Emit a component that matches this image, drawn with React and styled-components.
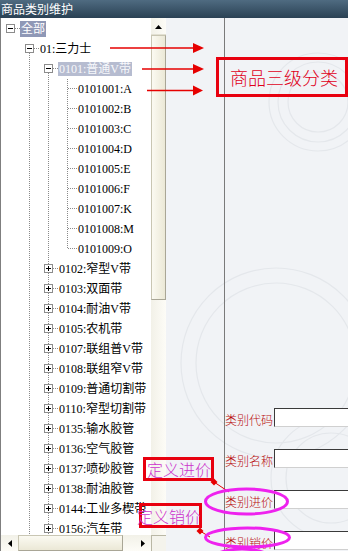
import React from 'react';
import styled, { createGlobalStyle } from 'styled-components';

const Global = createGlobalStyle`
  html, body { margin: 0; padding: 0; }
  body { width: 348px; height: 551px; overflow: hidden; background: #fff; }
`;

const Page = styled.div`
  position: relative;
  width: 348px;
  height: 551px;
  overflow: hidden;
  display: flex;
  flex-direction: column;
  font-family: "Liberation Serif", "Noto Sans CJK SC", serif;
`;

const TitleBar = styled.div`
  height: 18px;
  flex: none;
  background: linear-gradient(#4f6b81, #2a4154);
  color: #fff;
  font: 12px/18px "Noto Sans CJK SC", sans-serif;
  padding-left: 1px;
`;

const Body = styled.div`
  flex: 1;
  display: flex;
  min-height: 0;
`;

const TreePane = styled.div`
  width: 166px;
  flex: none;
  display: grid;
  grid-template-columns: 151px 15px;
  grid-template-rows: 1fr 16px;
  background: #fff;
`;

const TreeView = styled.div`
  border-left: 1px solid #7f7f7f;
  padding-top: 1px;
  overflow: hidden;
  background: #fff;
`;

const Row = styled.div`
  display: flex;
  height: 20px;
  align-items: center;
  white-space: nowrap;
`;

const Cell = styled.svg`
  flex: none;
  width: 19px;
  height: 20px;
  display: block;
`;

const Label = styled.span`
  font-size: 12px;
  line-height: ${p => (p.$sel === 'active' ? '16px' : '14px')};
  height: ${p => (p.$sel === 'active' ? '16px' : '14px')};
  padding: 0 1px;
  color: ${p => (p.$sel === 'active' ? '#fff' : p.$sel === 'inactive' ? '#f7f8fb' : '#000')};
  background: ${p => (p.$sel === 'active' ? '#8f98b6' : p.$sel === 'inactive' ? '#b6bcd0' : 'transparent')};
`;

const VScroll = styled.div`
  display: flex;
  flex-direction: column;
  background: linear-gradient(to right, #f2f1e8, #fdfcf7);
`;

const ScrollBtn = styled.div`
  flex: none;
  ${p => (p.$horizontal ? `width: ${p.$w || 16}px;` : 'height: 16px;')}
  display: flex;
  align-items: center;
  justify-content: center;
  box-sizing: border-box;
  margin-top: ${p => (p.$horizontal ? 0 : 1)}px;
  border-bottom: ${p => (p.$horizontal ? 'none' : '1px solid #e2e0d2')};
`;

const VThumb = styled.div`
  flex: none;
  height: 265px;
  box-sizing: border-box;
  background: linear-gradient(to right, #fbfaf2, #ebe8d6);
  border: 1px solid #c9c6b3;
  border-right-color: #a9a696;
  border-bottom-color: #a9a696;
`;

const HScroll = styled.div`
  display: flex;
  background: linear-gradient(#f2f1e8, #fdfcf7);
  border-left: 1px solid #7f7f7f;
`;

const HThumb = styled.div`
  flex: none;
  width: 105px;
  box-sizing: border-box;
  background: linear-gradient(#fbfaf2, #ebe8d6);
  border: 1px solid #c9c6b3;
  border-right-color: #a9a696;
  border-bottom-color: #a9a696;
`;

const HTrack = styled.div`
  flex: 1;
`;

const Corner = styled.div`
  background: #f4f3ec;
  border-top: 1px solid #b9b7a5;
  border-left: 1px solid #b9b7a5;
  box-sizing: border-box;
`;

const MainPane = styled.div`
  flex: 1;
  position: relative;
  display: flex;
  background: #f1f3f6;
  overflow: hidden;
`;

const Decor = styled.svg`
  position: absolute;
  left: 0;
  top: 0;
  width: 100%;
  height: 100%;
`;

const Gutter = styled.div`
  width: 58px;
  flex: none;
`;

const Form = styled.div`
  position: relative;
  flex: 1;
  border-left: 1px solid #7a7a7a;
  padding-top: 390px;
  display: flex;
  flex-direction: column;
  gap: 22px;
`;

const FieldRow = styled.div`
  display: flex;
  height: 19px;
  align-items: center;
`;

const FieldLabel = styled.span`
  width: 49px;
  flex: none;
  font: 300 12px/19px "Noto Sans CJK SC", sans-serif;
  color: #b80c0c;
  margin-top: 4px;
  white-space: nowrap;
`;

const Input = styled.div`
  flex: 1;
  height: 19px;
  box-sizing: border-box;
  background: #fff;
  border-top: 1px solid #3a3a3a;
  border-left: 1px solid #3a3a3a;
  border-bottom: 1px solid #d0d0d0;
`;

const Overlay = styled.svg`
  position: absolute;
  left: 0;
  top: 0;
  width: 348px;
  height: 551px;
  pointer-events: none;
`;

const Callout = styled.div`
  position: absolute;
  left: ${p => p.$x}px;
  top: ${p => p.$y}px;
  width: ${p => p.$w}px;
  height: ${p => p.$h}px;
  box-sizing: border-box;
  border: 3px solid #e8000f;
  display: flex;
  align-items: center;
  padding-left: ${p => p.$pad}px;
  color: ${p => p.$color};
  font: 300 ${p => p.$size}px/1 "Noto Sans CJK SC", sans-serif;
  white-space: nowrap;
`;

const CalloutText = styled.span`
  margin-left: ${p => p.$shift || 0}px;
`;

const LINE = '#8a8a8a';

function Guide({ on }) {
  return (
    <Cell viewBox="0 0 19 20">
      {on && <line x1="9.5" y1="0" x2="9.5" y2="20" stroke={LINE} strokeDasharray="1 1" />}
    </Cell>
  );
}

function Joint({ box, open, above, below }) {
  const leaf = !box;
  return (
    <Cell viewBox="0 0 19 20">
      {above && (
        <line x1="9.5" y1="0" x2="9.5" y2={leaf ? 10 : 5} stroke={LINE} strokeDasharray="1 1" />
      )}
      {below && (
        <line x1="9.5" y1={leaf ? 10 : 14} x2="9.5" y2="20" stroke={LINE} strokeDasharray="1 1" />
      )}
      <line x1={leaf ? 10 : 14} y1="9.5" x2="19" y2="9.5" stroke={LINE} strokeDasharray="1 1" />
      {box && (
        <>
          <rect x="5.5" y="5.5" width="8" height="8" fill="#fff" stroke="#8c8c8c" />
          <rect x="7" y="9" width="5" height="1" fill="#000" />
          {!open && <rect x="9" y="7" width="1" height="5" fill="#000" />}
        </>
      )}
    </Cell>
  );
}

const leaves = ['A', 'B', 'C', 'D', 'E', 'F', 'K', 'M', 'O'];
const level2 = [
  '0102:窄型V带',
  '0103:双面带',
  '0104:耐油V带',
  '0105:农机带',
  '0107:联组普V带',
  '0108:联组窄V带',
  '0109:普通切割带',
  '0110:窄型切割带',
  '0135:输水胶管',
  '0136:空气胶管',
  '0137:喷砂胶管',
  '0138:耐油胶管',
  '0144:工业多楔带',
  '0156:汽车带',
];

const rows = [
  { label: '全部', guides: [], joint: { box: true, open: true }, sel: 'active' },
  { label: '01:三力士', guides: [false], joint: { box: true, open: true, below: true } },
  { label: '0101:普通V带', guides: [false, true], joint: { box: true, open: true, below: true }, sel: 'inactive' },
  ...leaves.map((l, i) => ({
    label: `010100${i + 1}:${l}`,
    guides: [false, true, true],
    joint: { above: true, below: i < leaves.length - 1 },
  })),
  ...level2.map(l => ({
    label: l,
    guides: [false, true],
    joint: { box: true, open: false, above: true, below: true },
  })),
];

function Tri({ dir }) {
  const pts = {
    up: '0,4 7,4 3.5,0',
    left: '4,0 4,7 0,3.5',
    right: '0,0 0,7 4,3.5',
  }[dir];
  const w = dir === 'up' ? 7 : 4;
  const h = dir === 'up' ? 4 : 7;
  return (
    <svg width={w} height={h} viewBox={`0 0 ${w} ${h}`}>
      <polygon points={pts} fill="#000" />
    </svg>
  );
}

const fields = ['类别代码', '类别名称', '类别进价', '类别销价'];

export default function App() {
  return (
    <Page>
      <Global />
      <TitleBar>商品类别维护</TitleBar>
      <Body>
        <TreePane>
          <TreeView>
            {rows.map((r, i) => (
              <Row key={i}>
                {r.guides.map((g, j) => (
                  <Guide key={j} on={g} />
                ))}
                <Joint {...r.joint} />
                <Label $sel={r.sel}>{r.label}</Label>
              </Row>
            ))}
          </TreeView>
          <VScroll>
            <ScrollBtn>
              <Tri dir="up" />
            </ScrollBtn>
            <VThumb />
          </VScroll>
          <HScroll>
            <ScrollBtn $horizontal $w={17}>
              <Tri dir="left" />
            </ScrollBtn>
            <HThumb />
            <HTrack />
            <ScrollBtn $horizontal>
              <Tri dir="right" />
            </ScrollBtn>
          </HScroll>
          <Corner />
        </TreePane>
        <MainPane>
          <Decor viewBox="0 0 182 533" preserveAspectRatio="none">
            <g fill="none" stroke="#e4e7eb" strokeWidth="1.2">
              <circle cx="152" cy="84" r="30" />
              <circle cx="152" cy="84" r="40" />
              <circle cx="152" cy="84" r="49" />
              <circle cx="110" cy="345" r="95" />
              <circle cx="110" cy="345" r="80" />
              <circle cx="165" cy="460" r="45" />
              <circle cx="165" cy="460" r="60" />
            </g>
          </Decor>
          <Gutter />
          <Form>
            {fields.map(f => (
              <FieldRow key={f}>
                <FieldLabel>{f}</FieldLabel>
                <Input />
              </FieldRow>
            ))}
          </Form>
        </MainPane>
      </Body>

      <Overlay viewBox="0 0 348 551">
        <g stroke="#e60000" strokeWidth="1.5" fill="#e60000">
          <line x1="110" y1="48" x2="195" y2="48" />
          <polygon points="193,43 204,48 193,53" stroke="none" />
          <line x1="142" y1="69" x2="195" y2="69" />
          <polygon points="193,64 204,69 193,74" stroke="none" />
          <line x1="147" y1="90.5" x2="195" y2="90.5" />
          <polygon points="193,85.5 203,90.5 193,95.5" stroke="none" />
          <line x1="214" y1="482" x2="229" y2="492" strokeWidth="1" />
          <polygon points="214,478.5 217.5,482 214,485.5 210.5,482" stroke="none" />
          <line x1="200" y1="531" x2="210" y2="537" strokeWidth="1" />
          <polygon points="200,527.5 203.5,531 200,534.5 196.5,531" stroke="none" />
        </g>
        <g fill="none" stroke="#ee22ee" strokeWidth="3">
          <ellipse cx="246.5" cy="501.5" rx="41" ry="12.5" />
          <ellipse cx="247.5" cy="537.5" rx="42" ry="9.5" />
          <ellipse cx="242" cy="564" rx="34" ry="15" />
        </g>
      </Overlay>

      <Callout $x={216} $y={57} $w={132} $h={40} $pad={11} $size={18} $color="#e0001a">
        <CalloutText>商品三级分类</CalloutText>
      </Callout>
      <Callout $x={143} $y={457} $w={71} $h={24} $pad={1} $size={16} $color="#cc33cc">
        <CalloutText>定义进价</CalloutText>
      </Callout>
      <Callout $x={139} $y={503} $w={63} $h={25} $pad={0} $size={16} $color="#cc33cc">
        <CalloutText $shift={-5}>定义销价</CalloutText>
      </Callout>
    </Page>
  );
}
